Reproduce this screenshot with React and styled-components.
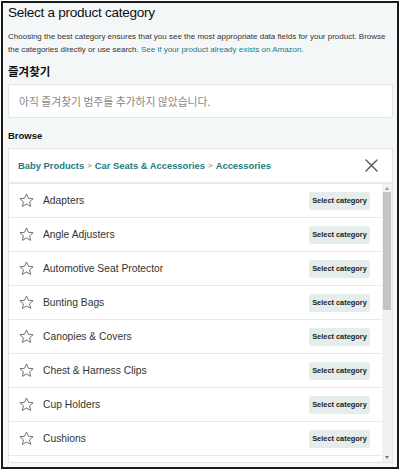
import React from "react";
import styled, { createGlobalStyle } from "styled-components";

const Global = createGlobalStyle`
  html, body { margin: 0; padding: 0; background: #fff; }
  * { box-sizing: border-box; }
  body { font-family: "Liberation Sans", "Noto Sans CJK KR", sans-serif; }
`;

const Frame = styled.div`
  width: 400px;
  height: 470px;
  padding: 1px;
  background: #fff;
`;

const Inner = styled.div`
  height: 100%;
  border: 2px solid #1a1a1a;
  background: #f4f7f7;
  padding: 0 4px 4px 5px;
  display: flex;
  flex-direction: column;
  overflow: hidden;
`;

const Title = styled.h1`
  margin: 0;
  font-size: 13.6px;
  font-weight: 400;
  letter-spacing: -0.3px;
  line-height: 20px;
  color: #111;
`;

const Desc = styled.p`
  margin: 6.5px 0 0;
  font-size: 8px;
  line-height: 13px;
  color: #333;
  white-space: nowrap;
`;

const Link = styled.span`
  color: #1d7a85;
`;

const Label = styled.h2`
  margin: ${(p) => p.$top}px 0 0;
  font-size: ${(p) => p.$size}px;
  font-weight: 700;
  line-height: 16px;
  color: #111;
  font-family: ${(p) => (p.$ko ? '"Noto Sans CJK KR", sans-serif' : '"Liberation Sans", sans-serif')};
`;

const FavBox = styled.div`
  margin-top: 5px;
  height: 34px;
  flex: none;
  background: #fff;
  border: 1px solid #e3e6e6;
  border-radius: 2px;
  display: flex;
  align-items: center;
  padding-left: 10px;
  font-size: 10.8px;
  color: #888;
  font-family: "Noto Sans CJK KR", sans-serif;
`;

const Panel = styled.div`
  margin-top: 4px;
  flex: 1;
  background: #fff;
  border: 1px solid #e3e6e6;
  display: flex;
  flex-direction: column;
  min-height: 0;
`;

const Crumbs = styled.div`
  height: 35px;
  flex: none;
  display: flex;
  align-items: center;
  justify-content: space-between;
  padding: 0 14px 0 9px;
  border-bottom: 2px solid #e8eaea;
`;

const CrumbText = styled.div`
  font-size: 9.4px;
  font-weight: 700;
  color: #1d7a85;
  display: flex;
  gap: 3px;
  align-items: center;
  white-space: nowrap;
`;

const Sep = styled.span`
  color: #666;
  font-weight: 400;
  font-size: 8px;
`;

const Body = styled.div`
  flex: 1;
  display: flex;
  min-height: 0;
`;

const List = styled.div`
  flex: 1;
  overflow: hidden;
`;

const Row = styled.div`
  height: 34px;
  display: flex;
  align-items: center;
  padding: 0 12px 0 9px;
  border-bottom: 1px solid #e9ebeb;
`;

const Name = styled.span`
  flex: 1;
  margin-left: 8px;
  font-size: 10.3px;
  color: #333;
  white-space: nowrap;
`;

const SelectBtn = styled.button`
  width: 61px;
  height: 18px;
  padding: 0;
  border: none;
  border-radius: 3px;
  background: #e5ecec;
  font-family: "Liberation Sans", sans-serif;
  font-size: 7.4px;
  font-weight: 700;
  color: #222;
  white-space: nowrap;
`;

const Track = styled.div`
  width: 10px;
  flex: none;
  background: #f1f1f1;
  display: flex;
  flex-direction: column;
  align-items: center;
  padding-top: 3px;
`;

const Arrow = styled.div`
  width: 0;
  height: 0;
  border-left: 2.5px solid transparent;
  border-right: 2.5px solid transparent;
  ${(p) =>
    p.$down
      ? "border-top: 3px solid #777; margin-top: auto; margin-bottom: 3px;"
      : "border-bottom: 3px solid #999;"}
`;

const Thumb = styled.div`
  width: 8px;
  height: 118px;
  margin-top: 2px;
  background: #c4c4c4;
`;

const Star = () => (
  <svg width="17" height="17" viewBox="0 0 24 24" fill="none" stroke="#6f6f6f" strokeWidth="1.4" strokeLinejoin="round">
    <path d="M12 2.8l2.75 6.05 6.6.6-5 4.4 1.5 6.5L12 16.95 6.15 20.35l1.5-6.5-5-4.4 6.6-.6z" />
  </svg>
);

const Close = () => (
  <svg width="13" height="13" viewBox="0 0 13 13" stroke="#555" strokeWidth="1.4" strokeLinecap="round">
    <path d="M1 1l11 11M12 1L1 12" />
  </svg>
);

const items = [
  "Adapters",
  "Angle Adjusters",
  "Automotive Seat Protector",
  "Bunting Bags",
  "Canopies & Covers",
  "Chest & Harness Clips",
  "Cup Holders",
  "Cushions",
  "Head Supports",
  "Mirrors",
];

export default function App() {
  return (
    <>
      <Global />
      <Frame>
        <Inner>
          <Title>Select a product category</Title>
          <Desc>
            Choosing the best category ensures that you see the most appropriate data fields for your product. Browse
            <br />
            the categories directly or use search. <Link>See if your product already exists on Amazon.</Link>
          </Desc>
          <Label $top={7.5} $size={11.5} $ko>즐겨찾기</Label>
          <FavBox>아직 즐겨찾기 범주를 추가하지 않았습니다.</FavBox>
          <Label $top={10} $size={9.5}>Browse</Label>
          <Panel>
            <Crumbs>
              <CrumbText>
                Baby Products <Sep>&gt;</Sep> Car Seats &amp; Accessories <Sep>&gt;</Sep> Accessories
              </CrumbText>
              <Close />
            </Crumbs>
            <Body>
              <List>
                {items.map((it) => (
                  <Row key={it}>
                    <Star />
                    <Name>{it}</Name>
                    <SelectBtn>Select category</SelectBtn>
                  </Row>
                ))}
              </List>
              <Track>
                <Arrow />
                <Thumb />
                <Arrow $down />
              </Track>
            </Body>
          </Panel>
        </Inner>
      </Frame>
    </>
  );
}
